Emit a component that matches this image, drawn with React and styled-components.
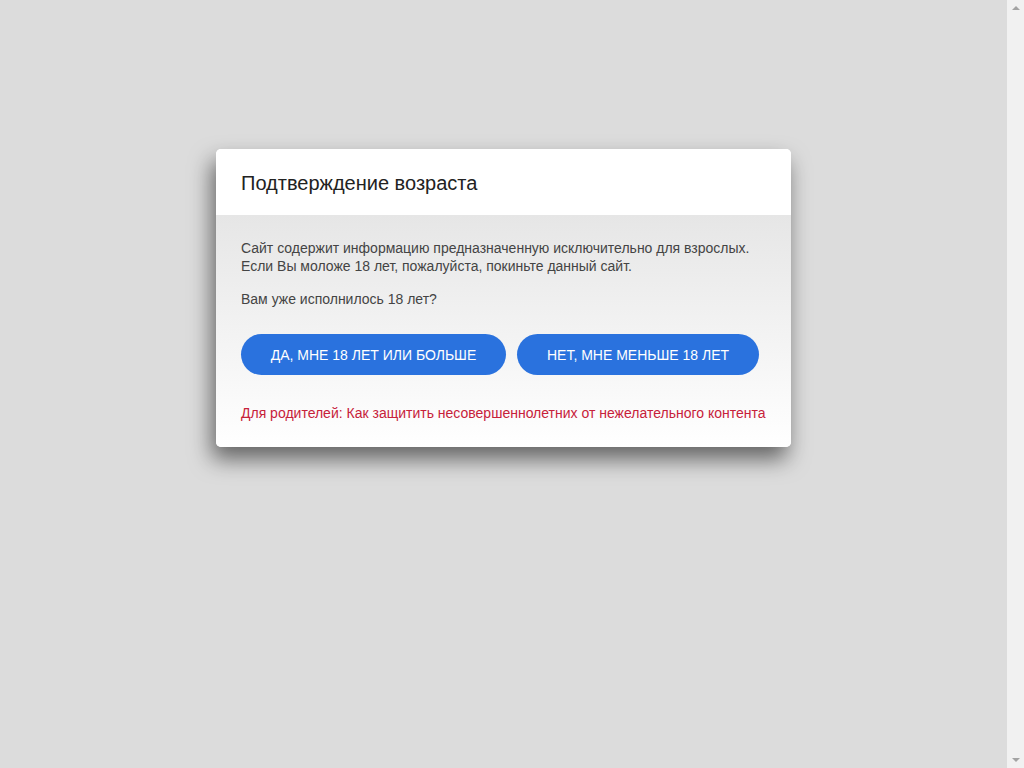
import React from 'react';
import styled, { createGlobalStyle } from 'styled-components';

const GlobalStyle = createGlobalStyle`
  body {
    margin: 0;
    background: #dcdcdc;
    font-family: 'Liberation Sans', Arial, sans-serif;
  }
`;

const Page = styled.div`
  min-height: 768px;
  display: flex;
  justify-content: center;
  align-items: flex-start;
  padding-top: 149px;
  padding-right: 17px;
  box-sizing: border-box;
`;

// fake classic scrollbar on the right edge
const ScrollTrack = styled.div`
  position: fixed;
  top: 0;
  right: 0;
  width: 17px;
  height: 100%;
  background: #f1f1f1;
  display: flex;
  flex-direction: column;
  justify-content: space-between;
  align-items: center;
  padding: 6px 0;
  box-sizing: border-box;
`;

const Arrow = styled.div`
  width: 0;
  height: 0;
  border-left: 4px solid transparent;
  border-right: 4px solid transparent;
  ${p => p.$down
    ? 'border-top: 4px solid #a3a3a3;'
    : 'border-bottom: 4px solid #a3a3a3;'}
`;

const Modal = styled.div`
  width: 575px;
  border-radius: 5px;
  overflow: hidden;
  background: #fff;
  box-shadow: -4px 12px 22px rgba(0, 0, 0, 0.55);
`;

const Header = styled.div`
  height: 66px;
  padding: 2px 25px 0;
  box-sizing: border-box;
  display: flex;
  align-items: center;
  background: #fff;
`;

const Title = styled.h2`
  margin: 0;
  font-size: 20px;
  font-weight: normal;
  color: #222;
`;

const Body = styled.div`
  padding: 24px 25px 25px;
  background: linear-gradient(to bottom, #e6e6e6 0%, #ffffff 100%);
`;

const Text = styled.p`
  margin: 0 0 ${p => p.$gap || 0}px;
  font-size: 14px;
  line-height: 18px;
  color: #444;
`;

const Buttons = styled.div`
  display: flex;
  gap: 11px;
  margin-top: 26px;
`;

const Button = styled.button`
  height: 41px;
  width: ${p => p.$w}px;
  border: none;
  border-radius: 21px;
  background: #2a72de;
  color: #fff;
  font-family: 'Liberation Sans', Arial, sans-serif;
  font-size: 14px;
  text-transform: uppercase;
  cursor: pointer;
`;

const ParentLink = styled.a`
  display: block;
  margin-top: 29px;
  font-size: 14px;
  line-height: 18px;
  color: #c7213a;
  text-decoration: none;
`;

export default function App() {
  return (
    <>
      <GlobalStyle />
      <Page>
        <Modal>
          <Header>
            <Title>Подтверждение возраста</Title>
          </Header>
          <Body>
            <Text $gap={15}>
              Сайт содержит информацию предназначенную исключительно для взрослых.
              <br />
              Если Вы моложе 18 лет, пожалуйста, покиньте данный сайт.
            </Text>
            <Text>Вам уже исполнилось 18 лет?</Text>
            <Buttons>
              <Button $w={265}>Да, мне 18 лет или больше</Button>
              <Button $w={242}>Нет, мне меньше 18 лет</Button>
            </Buttons>
            <ParentLink href="#">
              Для родителей: Как защитить несовершеннолетних от нежелательного контента
            </ParentLink>
          </Body>
        </Modal>
      </Page>
      <ScrollTrack>
        <Arrow />
        <Arrow $down />
      </ScrollTrack>
    </>
  );
}
